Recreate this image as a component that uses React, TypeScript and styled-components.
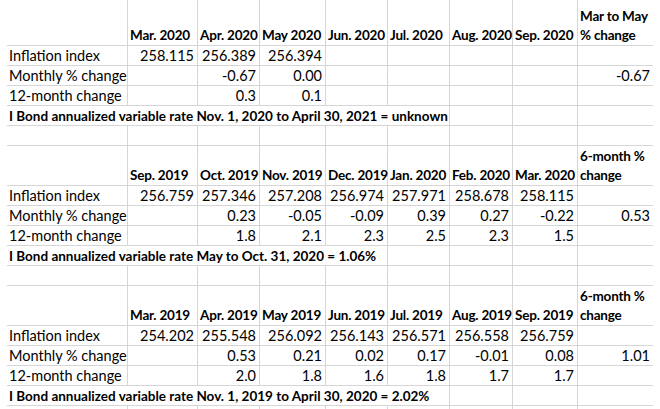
import React from 'react'
import styled, { createGlobalStyle } from 'styled-components'

const GlobalStyle = createGlobalStyle`
  html, body {
    margin: 0;
    padding: 0;
    background: #fff;
    overflow: hidden;
  }
  body {
    font-family: Lato, "Open Sans", "Liberation Sans", sans-serif;
    color: #000;
  }
`

// column widths incl. the 1px gridline on the right
const COLS = [121, 70, 62, 66, 62, 62, 63, 65, 75]
const GRID = '#d6d6d6'

interface ISection {
  headers: string[]
  lastHeader: [string, string]
  index: string[]
  monthly: string[]
  yearly: string[]
  change: string
  rate: string
  span: number
  headH: number
}

const sections: ISection[] = [
  {
    headers: ['Mar. 2020', 'Apr. 2020', 'May 2020', 'Jun. 2020', 'Jul. 2020', 'Aug. 2020', 'Sep. 2020'],
    lastHeader: ['Mar to May', '% change'],
    index: ['258.115', '256.389', '256.394', '', '', '', ''],
    monthly: ['', '-0.67', '0.00', '', '', '', ''],
    yearly: ['', '0.3', '0.1', '', '', '', ''],
    change: '-0.67',
    rate: 'I Bond annualized variable rate Nov. 1, 2020 to April 30, 2021 = unknown',
    span: 6,
    headH: 46,
  },
  {
    headers: ['Sep. 2019', 'Oct. 2019', 'Nov. 2019', 'Dec. 2019', 'Jan. 2020', 'Feb. 2020', 'Mar. 2020'],
    lastHeader: ['6-month %', 'change'],
    index: ['256.759', '257.346', '257.208', '256.974', '257.971', '258.678', '258.115'],
    monthly: ['', '0.23', '-0.05', '-0.09', '0.39', '0.27', '-0.22'],
    yearly: ['', '1.8', '2.1', '2.3', '2.5', '2.3', '1.5'],
    change: '0.53',
    rate: 'I Bond annualized variable rate May to Oct. 31, 2020 = 1.06%',
    span: 5,
    headH: 40,
  },
  {
    headers: ['Mar. 2019', 'Apr. 2019', 'May 2019', 'Jun. 2019', 'Jul. 2019', 'Aug. 2019', 'Sep. 2019'],
    lastHeader: ['6-month %', 'change'],
    index: ['254.202', '255.548', '256.092', '256.143', '256.571', '256.558', '256.759'],
    monthly: ['', '0.53', '0.21', '0.02', '0.17', '-0.01', '0.08'],
    yearly: ['', '2.0', '1.8', '1.6', '1.8', '1.7', '1.7'],
    change: '1.01',
    rate: 'I Bond annualized variable rate Nov. 1, 2019 to April 30, 2020 = 2.02%',
    span: 6,
    headH: 40,
  },
]

const Sheet = styled.div`
  display: grid;
  grid-template-columns: ${COLS.map(w => `${w}px`).join(' ')};
  margin-left: 7px;
  font-size: 14.5px;
`

const Cell = styled.div<{ $h?: number; $right?: boolean; $bold?: boolean; $last?: boolean; $span?: number }>`
  box-sizing: border-box;
  height: ${p => p.$h ?? 20}px;
  grid-column: span ${p => p.$span ?? 1};
  display: flex;
  flex-direction: column;
  justify-content: flex-end;
  align-items: ${p => (p.$right ? 'flex-end' : 'flex-start')};
  padding: 0 ${p => (p.$right ? 3 : 0)}px 0 ${p => (p.$right ? 0 : 2)}px;
  border-right: ${p => (p.$last ? 'none' : `1px solid ${GRID}`)};
  border-bottom: 1px solid ${GRID};
  font-weight: ${p => (p.$bold ? 700 : 400)};
  font-size: ${p => (p.$bold ? 13.5 : 14.5)}px;
  line-height: 18px;
  white-space: nowrap;
  overflow: visible;
`

// bold month headers, a touch tighter so they keep a gap like the sheet
const HeadLine = styled.span`
  line-height: 19px;
  letter-spacing: -0.2px;
`

const DataRow = ({ label, values, change }: { label: string; values: string[]; change?: string }) => (
  <>
    <Cell>{label}</Cell>
    {values.map((v, i) => (
      <Cell key={i} $right>{v}</Cell>
    ))}
    <Cell $right $last>{change}</Cell>
  </>
)

const BlankRow = () => (
  <>
    {COLS.map((_, i) => (
      <Cell key={i} $last={i === COLS.length - 1} />
    ))}
  </>
)

const Block = ({ s }: { s: ISection }) => (
  <>
    <Cell $h={s.headH} />
    {s.headers.map(h => (
      <Cell key={h} $h={s.headH} $bold>
        <HeadLine>{h}</HeadLine>
      </Cell>
    ))}
    <Cell $h={s.headH} $bold $last>
      <HeadLine>{s.lastHeader[0]}</HeadLine>
      <HeadLine>{s.lastHeader[1]}</HeadLine>
    </Cell>
    <DataRow label='Inflation index' values={s.index} />
    <DataRow label='Monthly % change' values={s.monthly} change={s.change} />
    <DataRow label='12-month change' values={s.yearly} />
    <Cell $bold $span={s.span}>{s.rate}</Cell>
    {COLS.slice(s.span).map((_, i) => (
      <Cell key={i} $last={s.span + i === COLS.length - 1} />
    ))}
    <BlankRow />
  </>
)

const App = () => {
  return (
    <>
      <GlobalStyle />
      <Sheet>
        {sections.map((s, i) => (
          <Block key={i} s={s} />
        ))}
      </Sheet>
    </>
  )
}

export default App
